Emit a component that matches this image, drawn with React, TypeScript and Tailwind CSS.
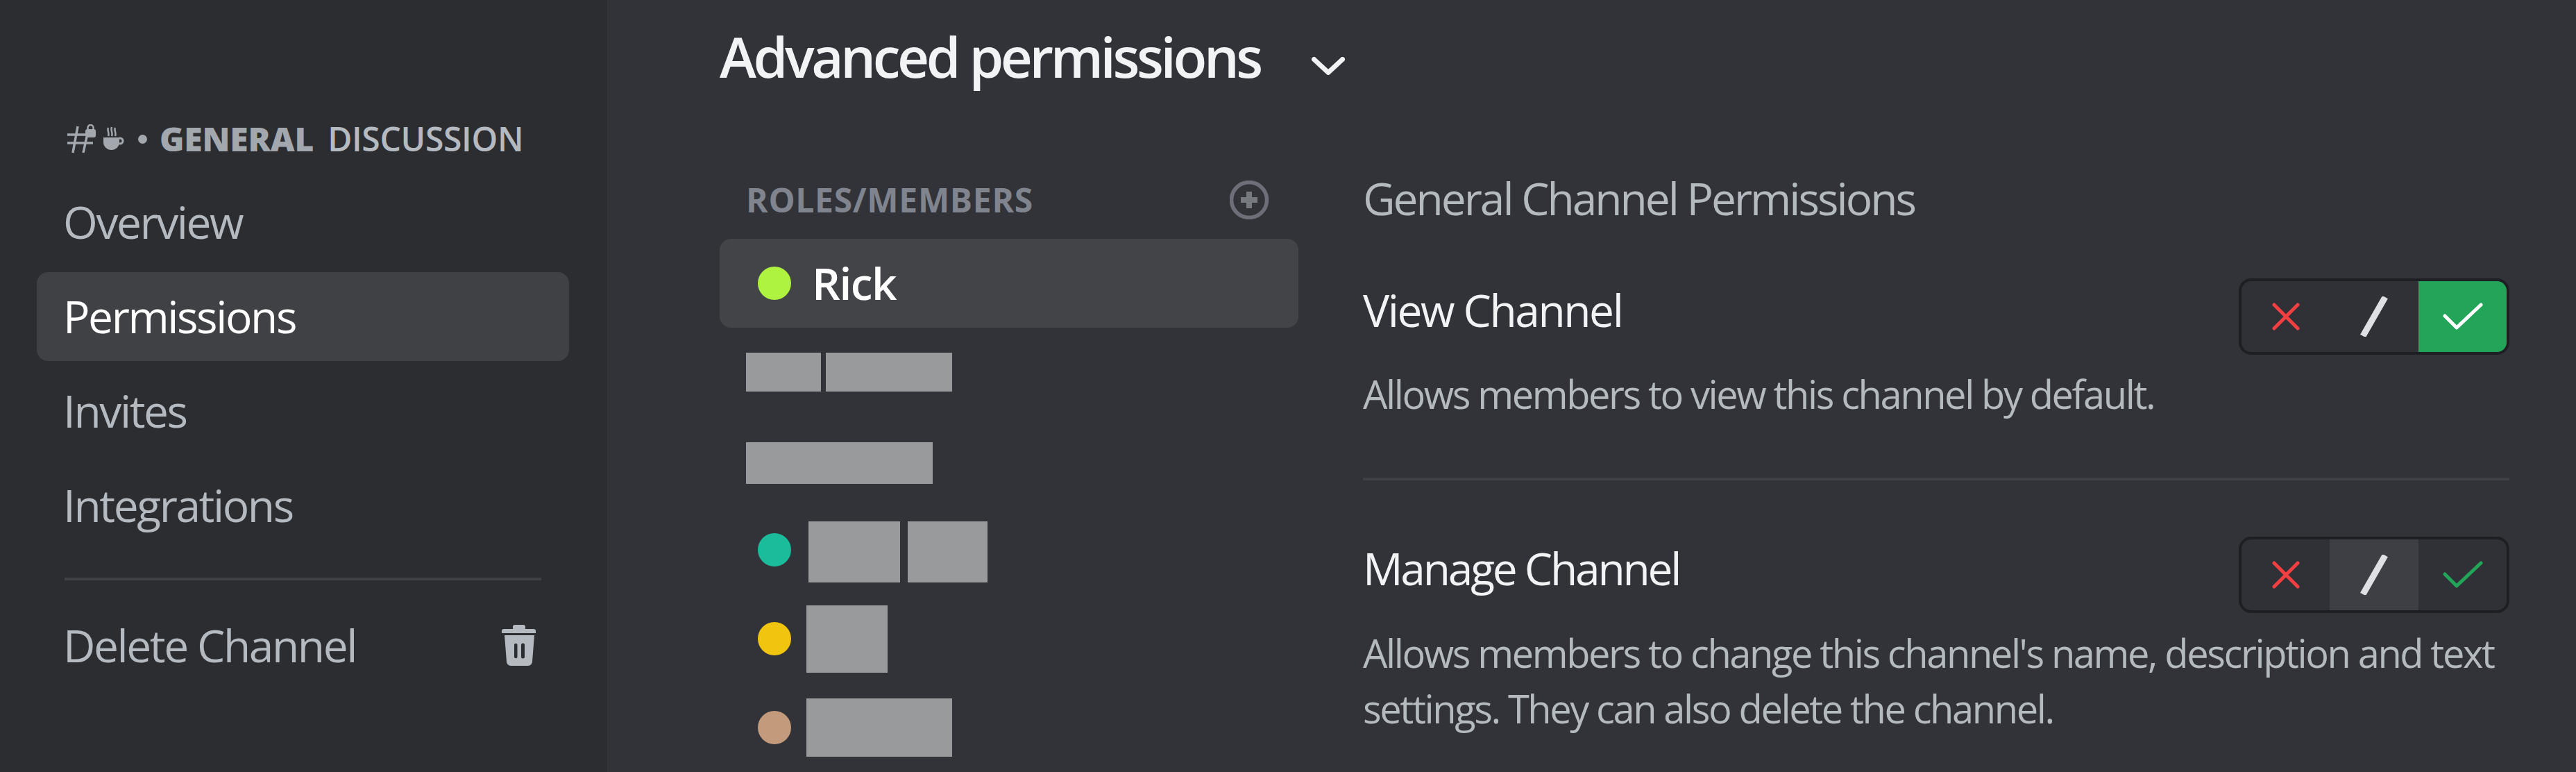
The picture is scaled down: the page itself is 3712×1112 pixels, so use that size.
const FONT = "font-['Open_Sans',sans-serif]";

function Nav({ label, active }: { label: string; active?: boolean }) {
  return (
    <div className={`flex h-[128px] items-center rounded-[16px] pl-[38px] text-[64px] font-medium tracking-[-2.4px] ${active ? "bg-[#404145] text-white" : "text-[#b5bac1]"}`}>
      {label}
    </div>
  );
}

function Toggle({ mode }: { mode: "neutral" | "allow" }) {
  return (
    <div className="flex h-[110px] w-[390px] shrink-0 overflow-hidden rounded-[18px] border-[4px] border-[#1e1f22] bg-[#2f3136]">
      <div className="flex w-[127px] items-center justify-center">
        <svg width="40" height="40" viewBox="0 0 40 40" fill="none" stroke="#f23f42" strokeWidth="5" strokeLinecap="round">
          <path d="M3 3 L37 37 M37 3 L3 37" />
        </svg>
      </div>
      <div className={`flex w-[128px] items-center justify-center ${mode === "neutral" ? "bg-[#3d3f45]" : ""}`}>
        <svg width="42" height="58" viewBox="0 0 42 58" fill="none" stroke="#dfe0e3" strokeWidth="9">
          <path d="M37 1 L5 57" />
        </svg>
      </div>
      <div className={`flex w-[127px] items-center justify-center ${mode === "allow" ? "bg-[#23a559]" : ""}`}>
        <svg width="58" height="40" viewBox="0 0 58 40" fill="none" stroke={mode === "allow" ? "#ffffff" : "#23a559"} strokeWidth="5" strokeLinecap="round" strokeLinejoin="round">
          <path d="M3 19 L20 36 L55 3" />
        </svg>
      </div>
    </div>
  );
}

function Dot({ color }: { color: string }) {
  return <div className={`h-[48px] w-[48px] shrink-0 rounded-full ${color}`} />;
}

export default function App() {
  return (
    <div className={`flex h-[1112px] w-[3712px] overflow-hidden bg-[#313338] ${FONT}`}>
      {/* Sidebar */}
      <aside className="w-[875px] shrink-0 bg-[#2b2d31] pl-[53px] pr-[55px] pt-[176px]">
        <div className="mb-[32px] flex h-[48px] items-center pl-[44px] text-[48px] text-[#a3a7ae]">
          <svg width="42" height="42" viewBox="0 0 42 42" fill="none" className="shrink-0">
            <path d="M15 3 L8 41 M28 18 L23 41 M0 15 H26 M0 27 H37" stroke="#a3a7ae" strokeWidth="3.5" />
            <rect x="26" y="7" width="15" height="12" rx="3" fill="#a3a7ae" />
            <path d="M29.5 8 V5 a4 4 0 0 1 8 0 V8" stroke="#a3a7ae" strokeWidth="2.5" />
          </svg>
          <svg width="30" height="34" viewBox="0 0 30 34" className="ml-[10px] shrink-0" fill="none">
            <path d="M0 15 H23 V22 C23 28 18 33 11.5 33 C5 33 0 28 0 22 Z" fill="#a3a7ae" />
            <circle cx="24" cy="20" r="4" stroke="#a3a7ae" strokeWidth="3" />
            <path d="M7 1 C5 5 9 8 7 13 M12 0 C10 5 14 8 12 13 M17 1 C15 5 19 8 17 13" stroke="#a3a7ae" strokeWidth="2.5" />
          </svg>
          <span className="ml-[20px] h-[13px] w-[13px] shrink-0 rounded-full bg-[#a3a7ae]" />
          <span className="ml-[18px] font-extrabold tracking-[-0.2px]">GENERAL</span>
          <span className="ml-[20px] font-semibold tracking-[-0.3px] text-[#b5bac1]">DISCUSSION</span>
        </div>
        <nav className="flex flex-col gap-[8px]">
          <Nav label="Overview" />
          <Nav label="Permissions" active />
          <Nav label="Invites" />
          <Nav label="Integrations" />
        </nav>
        <div className="mx-[40px] mb-[30px] mt-[40px] h-[4px] bg-[#3f4147]" />
        <div className="flex h-[128px] items-center justify-between pl-[38px] pr-[48px] text-[64px] font-medium tracking-[-2.4px] text-[#b5bac1]">
          <span>Delete Channel</span>
          <svg width="49" height="60" viewBox="0 0 49 60" fill="#b5bac1">
            <path d="M19 0 H31 a3 3 0 0 1 3 3 V6 H46 a3 3 0 0 1 3 3 V12 H0 V9 a3 3 0 0 1 3-3 H16 V3 a3 3 0 0 1 3-3 Z" />
            <path fillRule="evenodd" d="M4 15 H47 L44 53 a6 6 0 0 1-6 6 H13 a6 6 0 0 1-6-6 Z M18 29 a2.2 2.2 0 0 1 4.5 0 V46 a2.2 2.2 0 0 1-4.5 0 Z M28 29 a2.5 2.5 0 0 1 5 0 V46 a2.5 2.5 0 0 1-5 0 Z" />
          </svg>
        </div>
      </aside>

      {/* Main */}
      <main className="flex-1 pl-[162px] pr-[96px]">
        <div className="flex h-[180px] items-start pt-[26px]">
          <h1 className="text-[80px] font-semibold leading-[110px] tracking-[-4.4px] text-[#f2f3f5]">Advanced permissions</h1>
          <svg width="48" height="26" viewBox="0 0 48 26" fill="none" stroke="#f2f3f5" strokeWidth="7" strokeLinecap="round" strokeLinejoin="round" className="ml-[74px] mt-[56px]">
            <path d="M3.5 3.5 L24 22.5 L44.5 3.5" />
          </svg>
        </div>
        <div className="mt-[62px] flex gap-[93px]">
          {/* Roles */}
          <div className="w-[834px] shrink-0">
            <div className="flex h-[102px] items-start justify-between pl-[38px] pr-[43px] pt-[18px]">
              <span className="text-[48px] font-bold leading-[56px] tracking-[0.7px] text-[#80848e]">ROLES/MEMBERS</span>
              <svg width="56" height="56" viewBox="0 0 56 56" fill="none">
                <circle cx="28" cy="28" r="25.5" stroke="#6d6f78" strokeWidth="5.5" />
                <path d="M28 16 V40 M16 28 H40" stroke="#777a80" strokeWidth="8" />
              </svg>
            </div>
            <div className="flex h-[128px] items-center gap-[30px] rounded-[16px] bg-[#434448] pl-[55px] text-[64px] font-semibold tracking-[-1.5px] text-white">
              <Dot color="bg-[#aef33f]" />
              <span>Rick</span>
            </div>
            <div className="flex h-[128px] items-center gap-[7px] pl-[38px]">
              <div className="h-[56px] w-[108px] bg-[#999a9b]" />
              <div className="h-[56px] w-[182px] bg-[#999a9b]" />
            </div>
            <div className="flex h-[128px] items-center pl-[38px]">
              <div className="mt-[6px] h-[60px] w-[269px] bg-[#999a9b]" />
            </div>
            <div className="flex h-[128px] items-center pl-[55px]">
              <Dot color="bg-[#1abc9c]" />
              <div className="ml-[25px] mt-[6px] h-[88px] w-[132px] bg-[#999a9b]" />
              <div className="ml-[11px] mt-[6px] h-[88px] w-[115px] bg-[#999a9b]" />
            </div>
            <div className="flex h-[128px] items-center pl-[55px]">
              <Dot color="bg-[#f1c40f]" />
              <div className="ml-[22px] h-[97px] w-[117px] bg-[#999a9b]" />
            </div>
            <div className="flex h-[128px] items-center pl-[55px]">
              <Dot color="bg-[#c49a7c]" />
              <div className="ml-[22px] h-[84px] w-[210px] bg-[#999a9b]" />
            </div>
          </div>

          {/* Permissions */}
          <div className="flex-1 pt-[12px]">
            <div className="flex h-[64px] items-center text-[64px] tracking-[-3px] text-[#b5bac1]">General Channel Permissions</div>
            <div className="mt-[83px] flex items-start justify-between">
              <span className="text-[64px] font-medium leading-[92px] tracking-[-2.4px] text-[#f2f3f5]">View Channel</span>
              <Toggle mode="allow" />
            </div>
            <p className="mt-[16px] text-[56px] leading-[80px] tracking-[-2.4px] text-[#b5bac1]">Allows members to view this channel by default.</p>
            <div className="mt-[81px] h-[4px] bg-[#3f4147]" />
            <div className="mt-[81px] flex items-start justify-between">
              <span className="text-[64px] font-medium leading-[92px] tracking-[-3.2px] text-[#f2f3f5]">Manage Channel</span>
              <Toggle mode="neutral" />
            </div>
            <p className="mt-[17px] text-[56px] leading-[80px] tracking-[-2.4px] text-[#b5bac1]">Allows members to change this channel's name, description and text settings. They can also delete the channel.</p>
          </div>
        </div>
      </main>
    </div>
  );
}
